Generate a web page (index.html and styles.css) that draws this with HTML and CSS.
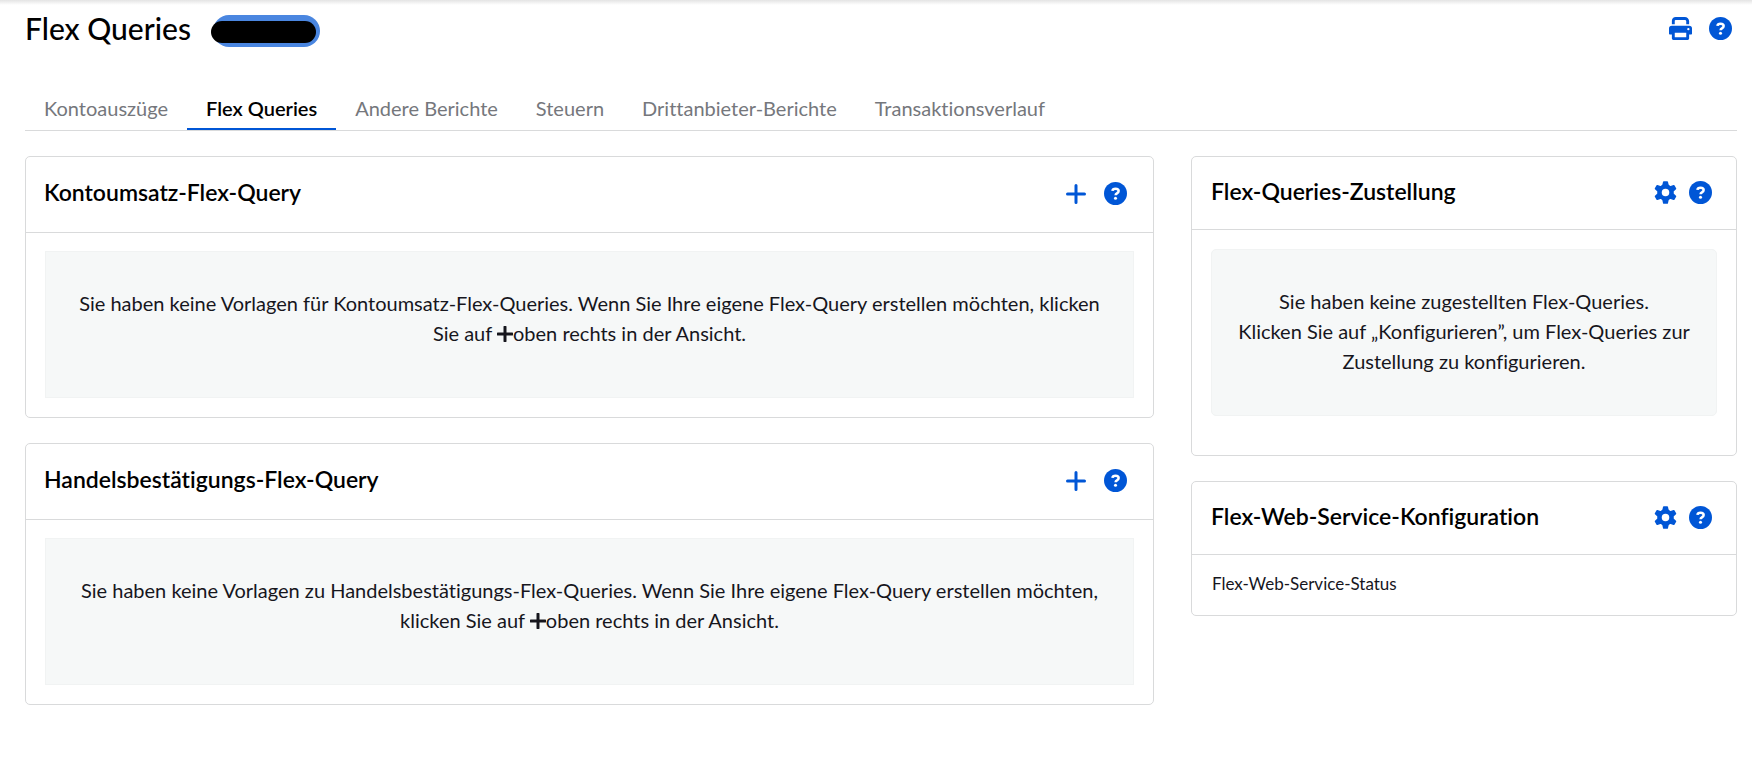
FILE: index.html
```html
<!DOCTYPE html>
<html lang="de">
<head>
<meta charset="utf-8">
<meta name="viewport" content="width=device-width, initial-scale=1">
<title>Flex Queries</title>
<link rel="stylesheet" href="styles.css">
</head>
<body>
<svg class="sprite" aria-hidden="true">
  <symbol id="help" viewBox="0 0 24 24">
    <circle cx="12" cy="12" r="12" fill="currentColor"/>
    <path d="M8.800 9.300C9 7.700 10.300 7 12 7c2 0 3.300 1 3.300 2.500 0 1.300-.9 1.900-1.800 2.400-.9.500-1.400.8-1.400 1.900" fill="none" stroke="#fff" stroke-width="2.600"/>
    <circle cx="12" cy="16.900" r="1.600" fill="#fff"/>
  </symbol>
  <symbol id="plus" viewBox="0 0 20 20">
    <path d="M10 1.500v17M1.500 10h17" fill="none" stroke="currentColor" stroke-width="3" stroke-linecap="round"/>
  </symbol>
  <symbol id="plus-bold" viewBox="0 0 16 16">
    <path d="M8 1v14M1 8h14" fill="none" stroke="currentColor" stroke-width="3" stroke-linecap="round"/>
  </symbol>
  <symbol id="gear" viewBox="0 0 24 24">
    <circle cx="12" cy="12" r="8.600" fill="currentColor"/>
    <g fill="currentColor" stroke="currentColor" stroke-width="1.600" stroke-linejoin="round">
      <path id="teeth" d="M10.200 1h3.600l1.200 5.500v11L13.800 23h-3.600L9 17.500v-11z"/>
      <use href="#teeth" transform="rotate(60 12 12)"/>
      <use href="#teeth" transform="rotate(120 12 12)"/>
    </g>
    <circle cx="12" cy="12" r="3.900" fill="#fff"/>
  </symbol>
  <symbol id="print" viewBox="0 0 24 24">
    <path d="M4.500 7.500V4a2.500 2.500 0 0 1 2.500-2.500h9.500a3 3 0 0 1 3 3v3" fill="none" stroke="currentColor" stroke-width="3"/>
    <path fill="currentColor" fill-rule="evenodd" d="M3 9h18a3 3 0 0 1 3 3v5.500a.8.8 0 0 1-.8.800H21V22.500a1.500 1.500 0 0 1-1.500 1.500h-15A1.500 1.500 0 0 1 3 22.500v-4.200H.8a.8.8 0 0 1-.8-.8V12a3 3 0 0 1 3-3zM6 16.500V21h12v-4.500zM20.200 11.500a1.200 1.200 0 1 0 0 2.400 1.200 1.200 0 0 0 0-2.400z"/>
  </symbol>
</svg>

<div class="page">
  <header class="page-header">
    <h1 class="page-title">Flex Queries</h1>
    <span class="account"><span class="account-mask"></span></span>
    <div class="page-actions">
      <button class="icon-button" type="button" aria-label="Drucken"><svg class="icon"><use href="#print"/></svg></button>
      <button class="icon-button" type="button" aria-label="Hilfe"><svg class="icon"><use href="#help"/></svg></button>
    </div>
  </header>

  <nav class="tabs">
    <a class="tab" href="#kontoauszuege">Kontoauszüge</a>
    <a class="tab tab-active" href="#flex" aria-current="page">Flex Queries</a>
    <a class="tab" href="#andere">Andere Berichte</a>
    <a class="tab" href="#steuern">Steuern</a>
    <a class="tab" href="#drittanbieter">Drittanbieter-Berichte</a>
    <a class="tab" href="#verlauf">Transaktionsverlauf</a>
  </nav>

  <main class="columns">
    <div class="column">
      <section class="card">
        <header class="card-header">
          <h2 class="card-title">Kontoumsatz-Flex-Query</h2>
          <div class="card-actions">
            <button class="icon-button" type="button" aria-label="Hinzufügen"><svg class="icon icon-plus"><use href="#plus"/></svg></button>
            <button class="icon-button" type="button" aria-label="Hilfe"><svg class="icon"><use href="#help"/></svg></button>
          </div>
        </header>
        <div class="card-body">
          <p class="notice">Sie haben keine Vorlagen für Kontoumsatz-Flex-Queries. Wenn Sie Ihre eigene Flex-Query erstellen möchten, klicken<br>Sie auf <svg class="inline-plus"><use href="#plus-bold"/></svg>oben rechts in der Ansicht.</p>
        </div>
      </section>
      <section class="card">
        <header class="card-header">
          <h2 class="card-title">Handelsbestätigungs-Flex-Query</h2>
          <div class="card-actions">
            <button class="icon-button" type="button" aria-label="Hinzufügen"><svg class="icon icon-plus"><use href="#plus"/></svg></button>
            <button class="icon-button" type="button" aria-label="Hilfe"><svg class="icon"><use href="#help"/></svg></button>
          </div>
        </header>
        <div class="card-body">
          <p class="notice">Sie haben keine Vorlagen zu Handelsbestätigungs-Flex-Queries. Wenn Sie Ihre eigene Flex-Query erstellen möchten,<br>klicken Sie auf <svg class="inline-plus"><use href="#plus-bold"/></svg>oben rechts in der Ansicht.</p>
        </div>
      </section>
    </div>

    <aside class="column">
      <section class="card card-side">
        <header class="card-header">
          <h2 class="card-title">Flex-Queries-Zustellung</h2>
          <div class="card-actions">
            <button class="icon-button" type="button" aria-label="Konfigurieren"><svg class="icon"><use href="#gear"/></svg></button>
            <button class="icon-button" type="button" aria-label="Hilfe"><svg class="icon"><use href="#help"/></svg></button>
          </div>
        </header>
        <div class="card-body">
          <p class="notice">Sie haben keine zugestellten Flex-Queries.<br>Klicken Sie auf „Konfigurieren”, um Flex-Queries zur<br>Zustellung zu konfigurieren.</p>
        </div>
      </section>
      <section class="card card-side">
        <header class="card-header">
          <h2 class="card-title">Flex-Web-Service-Konfiguration</h2>
          <div class="card-actions">
            <button class="icon-button" type="button" aria-label="Konfigurieren"><svg class="icon"><use href="#gear"/></svg></button>
            <button class="icon-button" type="button" aria-label="Hilfe"><svg class="icon"><use href="#help"/></svg></button>
          </div>
        </header>
        <p class="status">Flex-Web-Service-Status</p>
      </section>
    </aside>
  </main>
</div>
</body>
</html>
```
FILE: styles.css
```css
* {
  box-sizing: border-box;
}

body {
  margin: 0;
  background: linear-gradient(#e4e4e4, #fff 5px) no-repeat #fff;
  color: #16161d;
  font-family: Lato, "Open Sans", sans-serif;
  font-size: 20px;
  font-variant-ligatures: no-common-ligatures;
  line-height: 30px;
}

.sprite {
  position: absolute;
  width: 0;
  height: 0;
}

.page {
  padding: 8px 15px 24px 25px;
}

.page-header {
  display: flex;
  align-items: center;
  height: 40px;
}

.page-title {
  margin: 0;
  padding-bottom: 1px;
  color: #000;
  font-size: 30px;
  font-weight: 500;
}

.account {
  display: block;
  width: 107px;
  height: 32px;
  margin: 6px 0 0 22px;
  border-radius: 16px;
  background: #4a86e0;
}

.account-mask {
  display: block;
  position: relative;
  top: 6px;
  left: -2px;
  width: 105px;
  height: 22px;
  border-radius: 11px;
  background: #000;
}

.page-actions {
  display: flex;
  gap: 16px;
  margin-left: auto;
  padding-right: 5px;
}

.icon-button {
  display: flex;
  align-items: center;
  justify-content: center;
  width: 24px;
  height: 24px;
  padding: 0;
  border: 0;
  background: none;
  color: #0056d6;
  cursor: pointer;
}

.icon {
  width: 23px;
  height: 23px;
}

.icon-plus {
  width: 20px;
  height: 20px;
}

.tabs {
  display: flex;
  margin-top: 42px;
  border-bottom: 1px solid #d9dadb;
}

.tab {
  padding: 3px 19px 5px;
  border-bottom: 2px solid transparent;
  color: #75777c;
  text-decoration: none;
}

.tab-active {
  border-color: #0056d6;
  color: #000;
  font-weight: 600;
}

.columns {
  display: grid;
  grid-template-columns: 1129fr 546fr;
  align-items: start;
  gap: 37px;
  margin-top: 25px;
}

.column {
  display: grid;
  gap: 25px;
}

.card {
  border: 1px solid #d9dadb;
  border-radius: 5px;
}

.card-header {
  display: flex;
  align-items: center;
  justify-content: space-between;
  height: 76px;
  padding: 0 26px 2px 18px;
  border-bottom: 1px solid #d9dadb;
}

.card-title {
  margin: 0;
  padding-bottom: 3px;
  color: #000;
  font-size: 23px;
  font-weight: 600;
}

.card-actions {
  display: flex;
  gap: 15px;
}

.card-body {
  padding: 18px 19px 19px;
}

.notice {
  margin: 0;
  padding: 36px 10px 49px;
  border: 1px solid #f1f3f3;
  background: #f6f8f8;
  text-align: center;
}

.inline-plus {
  width: 16px;
  height: 16px;
  vertical-align: -1px;
}

.card-side .card-header {
  height: 73px;
  padding-right: 24px;
  padding-left: 19px;
}

.card-side .card-actions {
  gap: 11px;
}

.card-side .card-body {
  padding: 19px 19px 39px;
}

.card-side .notice {
  padding-bottom: 39px;
  border-radius: 5px;
}

.status {
  margin: 0;
  padding: 14px 20px 16px;
  font-size: 17px;
}
```
